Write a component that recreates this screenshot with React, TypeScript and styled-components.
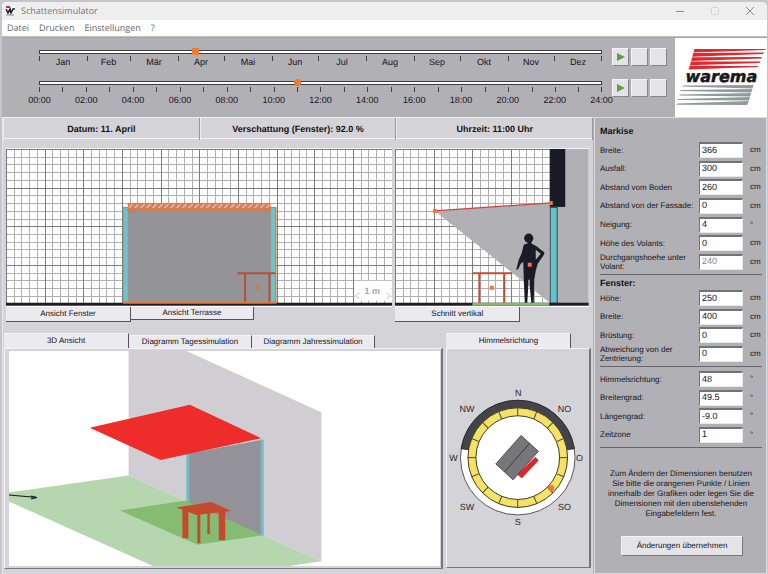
import React, { useState } from "react";
import styled, { createGlobalStyle } from "styled-components";

const GlobalStyle = createGlobalStyle`
  *, *::before, *::after { box-sizing: border-box; }
  body {
    margin: 0;
    background: #c9c8cc;
    font: 8px/10px "Liberation Sans", Arial, sans-serif;
    text-rendering: geometricPrecision;
    color: #141419;
  }
  button, input { font: inherit; color: inherit; border-radius: 0; text-rendering: inherit; }
  svg { display: block; }
  svg text { font-family: "Liberation Sans", Arial, sans-serif; }
`;

const Window = styled.div`
  min-height: 100vh;
  display: flex;
  flex-direction: column;
  background: #d4d3d8;
  border: 2px solid #c6c5ca;
  border-right-width: 1px;
  border-radius: 6px 6px 0 0;
  overflow: hidden;
`;

const TitleBar = styled.header`
  height: 18px;
  flex: none;
  display: flex;
  align-items: center;
  gap: 6px;
  padding-left: 3px;
  background: #eeeeee;
`;

const Title = styled.h1`
  flex: 1;
  margin: 0;
  font: 9px/12px "Open Sans", "Noto Sans", sans-serif;
  color: #77777b;
`;

const Controls = styled.div`
  display: flex;
`;

const WindowButton = styled.button`
  width: 35px;
  height: 18px;
  padding: 0;
  border: 0;
  background: none;
  display: grid;
  place-items: center;
`;

const MenuBar = styled.nav`
  height: 17px;
  flex: none;
  display: flex;
  align-items: center;
  gap: 10px;
  padding-left: 5px;
  background: #fff;
  border-bottom: 1px solid #c2c2c6;
`;

const MenuItem = styled.button`
  padding: 0;
  border: 0;
  background: none;
  font: 9px/14px "Open Sans", "Noto Sans", sans-serif;
  color: #66666a;
`;

const TimeBar = styled.section`
  display: flex;
  height: 80px;
  flex: none;
  background: #b1b0b5;
  border-top: 1px solid #a5a4a9;
`;

const Sliders = styled.div`
  flex: 1;
  display: flex;
  flex-direction: column;
  gap: 2px;
  padding: 10px 8px 0 37px;
  font-size: 9px;
`;

const SliderRow = styled.div`
  display: flex;
  gap: 10px;
  height: 29px;
`;

const SliderBody = styled.div`
  flex: 1;
  min-width: 0;
`;

const Range = styled.input<{ $round?: boolean }>`
  appearance: none;
  display: block;
  width: 100%;
  height: 8px;
  margin: 0;
  background: none;
  &::-webkit-slider-runnable-track {
    height: 4px;
    background: #fff;
    border: 1px solid #3c3c42;
  }
  &::-webkit-slider-thumb {
    appearance: none;
    width: 7px;
    height: 7px;
    margin-top: -3px;
    background: #f07832;
    border-radius: ${(p) => (p.$round ? "3px" : "1px")};
  }
`;

const tick = "linear-gradient(#3c3c42, #3c3c42)";

const MonthScale = styled.div`
  display: flex;
  height: 14px;
  margin-top: -1px;
  padding-top: 1px;
  background: ${tick} right 1px / 1px 5px no-repeat;
`;

const Month = styled.span<{ $days: number }>`
  flex: ${(p) => p.$days} 1 0;
  padding-top: 1px;
  text-align: center;
  background: ${tick} left top / 1px 5px no-repeat;
`;

const HourTicks = styled.div`
  display: flex;
  height: 6px;
  background: ${tick} right top / 1px 5px no-repeat;
`;

const HourTick = styled.i`
  flex: 1;
  background: ${tick} left top / 1px 5px no-repeat;
`;

const HourLabels = styled.div`
  display: flex;
  margin: 2px -23px 0;
`;

const HourLabel = styled.span`
  flex: 1 1 0;
  text-align: center;
`;

const PlayerButtons = styled.div`
  display: flex;
  gap: 2px;
`;

const PlayerButton = styled.button`
  width: 17px;
  height: 18px;
  padding: 0;
  display: grid;
  place-items: center;
  background: #e4e3e8;
  border: 1px solid;
  border-color: #f4f4f8 #85848a #85848a #f4f4f8;
`;

const Logo = styled.div`
  width: 92px;
  background: #fff;
`;

const Body = styled.main`
  flex: 1;
  display: grid;
  grid-template-columns: minmax(0, 1fr) 173px;
`;

const Workspace = styled.div`
  display: flex;
  flex-direction: column;
  border-right: 1px solid #b1b0b5;
  border-left: 1px solid #e6e5ea;
`;

const StatusBar = styled.div`
  display: grid;
  grid-template-columns: repeat(3, 1fr);
  height: 22px;
  border-top: 1px solid #eeedf2;
  border-bottom: 1px solid #f4f3f8;
`;

const StatusCell = styled.div`
  font-size: 9px;
  font-weight: bold;
  line-height: 22px;
  text-align: center;
  color: #111;
  border-right: 1px solid #97969c;
  border-left: 1px solid #eeedf2;
`;

const ViewGrid = styled.div<{ $columns: string }>`
  display: grid;
  grid-template-columns: ${(p) => p.$columns};
  gap: 3px;
`;

const TopViews = styled(ViewGrid)`
  padding: 9px 4px 0 3px;
`;

const BottomViews = styled(ViewGrid)`
  padding: 11px 2px 0 1px;
`;

const Panel = styled.section`
  display: flex;
  flex-direction: column;
  min-width: 0;
`;

const Drawing = styled.div`
  border-top: 1px solid #f4f4f8;
  background: #fff;
`;

const Tabs = styled.div<{ $below?: boolean }>`
  display: flex;
  align-items: ${(p) => (p.$below ? "flex-start" : "flex-end")};
`;

const Tab = styled.button<{ $active?: boolean; $below?: boolean }>`
  width: ${(p) => (p.$active ? "125px" : "123px")};
  height: ${(p) => (p.$active ? "15px" : "13px")};
  padding: 0;
  line-height: 12px;
  text-align: center;
  background: #ebeaef;
  border: 0 solid #55545a;
  border-right-width: 1px;
  border-bottom-width: ${(p) => (p.$below ? "1px" : "0")};
  ${(p) => (p.$below ? "" : "border-top: 1px solid #f6f6fa;")}
`;

const Frame = styled.div<{ $pad: string }>`
  padding: ${(p) => p.$pad};
  border: 1px solid;
  border-color: #f4f4f8 #77767c #77767c #f4f4f8;
  border-right-width: 2px;
`;

const Sidebar = styled.form`
  padding: 8px 4px 17px 5px;
  background: #b1b0b5;
  border: 1px solid #dddce1;
  border-bottom-width: 2px;
`;

const Heading = styled.h2<{ $gap?: boolean }>`
  margin: 0 0 ${(p) => (p.$gap ? "4px" : "0")};
  font-size: 9px;
  line-height: 11px;
  color: #111;
`;

const Fields = styled.div<{ $height: number }>`
  display: grid;
  grid-auto-rows: 1fr;
  min-height: ${(p) => p.$height}px;
`;

const Field = styled.div`
  display: grid;
  grid-template-columns: minmax(0, 1fr) 44px 17px;
  column-gap: 2px;
  align-items: center;
`;

const FieldLabel = styled.label`
  line-height: 9px;
  white-space: pre;
`;

const FieldInput = styled.input`
  width: 100%;
  height: 16px;
  padding: 0 0 2px 2px;
  font-size: 9px;
  background: #fff;
  border: 1px solid;
  border-color: #737278 #e8e7ec #e8e7ec #737278;
  border-top-width: 2px;
  &:disabled { color: #85858a; }
`;

const Unit = styled.span`
  padding-left: 5px;
`;

const Rule = styled.hr`
  height: 1px;
  margin: 3px 0;
  border: 0;
  background: #66656b;
`;

const Hint = styled.p`
  margin: 21px 0 17px;
  text-align: center;
  line-height: 10px;
`;

const Apply = styled.button`
  display: block;
  width: 122px;
  height: 20px;
  margin-left: 21px;
  padding: 0;
  background: #e4e3e8;
  border: 1px solid;
  border-color: #f4f4f8 #77767c #77767c #f4f4f8;
`;

const months: [string, number][] = [
  ["Jan", 31], ["Feb", 28], ["Mär", 31], ["Apr", 30], ["Mai", 31], ["Jun", 30],
  ["Jul", 31], ["Aug", 31], ["Sep", 30], ["Okt", 31], ["Nov", 30], ["Dez", 31],
];
const hours = Array.from({ length: 13 }, (_, i) => `${String(i * 2).padStart(2, "0")}:00`);

type FieldSpec = { id: string; label: string; value: string; unit: string; disabled?: boolean };
const awning: FieldSpec[] = [
  { id: "m-breite", label: "Breite:", value: "366", unit: "cm" },
  { id: "m-ausfall", label: "Ausfall:", value: "300", unit: "cm" },
  { id: "m-boden", label: "Abstand vom Boden", value: "260", unit: "cm" },
  { id: "m-fassade", label: "Abstand von der Fassade:", value: "0", unit: "cm" },
  { id: "m-neigung", label: "Neigung:", value: "4", unit: "°" },
  { id: "m-volant", label: "Höhe des Volants:", value: "0", unit: "cm" },
  { id: "m-durchgang", label: "Durchgangshoehe unter\nVolant:", value: "240", unit: "cm", disabled: true },
];
const windowFields: FieldSpec[] = [
  { id: "f-hoehe", label: "Höhe:", value: "250", unit: "cm" },
  { id: "f-breite", label: "Breite:", value: "400", unit: "cm" },
  { id: "f-bruestung", label: "Brüstung:", value: "0", unit: "cm" },
  { id: "f-zentrierung", label: "Abweichung von der\nZentrierung:", value: "0", unit: "cm" },
];
const place: FieldSpec[] = [
  { id: "o-richtung", label: "Himmelsrichtung:", value: "48", unit: "°" },
  { id: "o-breite", label: "Breitengrad:", value: "49.5", unit: "°" },
  { id: "o-laenge", label: "Längengrad:", value: "-9.0", unit: "°" },
  { id: "o-zone", label: "Zeitzone", value: "1", unit: "°" },
];

function FieldGroup({ items, height }: { items: FieldSpec[]; height: number }) {
  return (
    <Fields $height={height}>
      {items.map((f) => (
        <Field key={f.id}>
          <FieldLabel htmlFor={f.id}>{f.label}</FieldLabel>
          <FieldInput id={f.id} defaultValue={f.value} disabled={f.disabled} />
          <Unit>{f.unit}</Unit>
        </Field>
      ))}
    </Fields>
  );
}

function Player({ name }: { name: string }) {
  return (
    <PlayerButtons>
      <PlayerButton type="button" aria-label={`${name} abspielen`}>
        <svg width="9" height="10"><path d="M1 1L9 5L1 9Z" fill="#55a43c" /></svg>
      </PlayerButton>
      <PlayerButton type="button" aria-label={`${name} anhalten`} />
      <PlayerButton type="button" aria-label={`${name} stoppen`} />
    </PlayerButtons>
  );
}

const LogoText = styled.text`
  && { font: italic bold 16px "DejaVu Sans", sans-serif; }
  fill: #17171c;
  stroke: #17171c;
  stroke-width: 0.5px;
`;

function WaremaLogo() {
  return (
    <svg width="92" height="79" viewBox="675 38 92 79" role="img" aria-label="warema">
      <g fill="#dc2b30">
        <path d="M694.5 49H766L765 50L693.500 52.500Z" />
        <path d="M693.300 53L764 52.500L763 54L692.300 56.700Z" />
        <path d="M692.100 57.200L762 57L761 58.500L691.100 61Z" />
        <path d="M690.900 61.500L760.500 61.500L759.500 63L689.900 65.200Z" />
        <path d="M689.700 65.700L758.500 66L757.500 67L688.500 69.500Z" />
      </g>
      <g fill="#909b9c">
        <path d="M753.500 85L752.500 88.500L682 86.500L683 85.500Z" />
        <path d="M752.300 89L751.300 92.500L680 91L681 90Z" />
        <path d="M751.100 93L750.100 96.500L679 95.500L680 94.500Z" />
        <path d="M749.900 97L748.900 100.500L677.500 100L678.500 99Z" />
        <path d="M748.700 101L747.300 105L676 104.700L677.500 103.500Z" />
      </g>
      <LogoText x="685.500" y="81.500">warema</LogoText>
    </svg>
  );
}

function MeterGrid({ x, width }: { x: number; width: number }) {
  const step = 7.73;
  const lines = (from: number, length: number, major: boolean) =>
    Array.from({ length: Math.ceil(length / step) }, (_, i) => i)
      .filter((i) => (i % 5 === 0) === major)
      .map((i) => Math.round(from + i * step) + 0.5);
  const path = (major: boolean) =>
    lines(x, width, major).map((v) => `M${v} 149V303`).join("") +
    lines(149, 154, major).map((v) => `M${x} ${v}h${width}`).join("");
  return (
    <g shapeRendering="crispEdges">
      <path d={path(false)} stroke="#b0b0b3" />
      <path d={path(true)} stroke="#7c7c80" />
    </g>
  );
}

function TerraceView() {
  return (
    <svg width="100%" viewBox="6 149 387 158" role="img" aria-label="Ansicht Terrasse">
      <MeterGrid x={6} width={387} />
      <defs>
        <pattern id="hatch" x="128" y="204" width="6" height="5" patternUnits="userSpaceOnUse">
          <path d="M0 5L5 0" stroke="#f0c8b4" strokeWidth="1.300" />
        </pattern>
      </defs>
      <rect x="6" y="303" width="387" height="3" fill="#1d1d22" />
      <rect x="123.500" y="207.500" width="153" height="95" fill="#949398" stroke="#e07a3c" />
      <path d="M126 208V302M273.500 208V302" stroke="#6fc3ca" strokeWidth="4" />
      <rect x="128.500" y="203.500" width="142" height="8" fill="#cf7d5a" stroke="#e8752f" />
      <rect x="129" y="204" width="141" height="4" fill="url(#hatch)" />
      <path d="M123 303H277" stroke="#e07a3c" strokeWidth="2" />
      <path d="M238 273.500H276M245.500 274V302M270 274V302" stroke="#b94e36" strokeWidth="2" fill="none" />
      <rect x="255" y="286" width="5" height="4" fill="#d07a45" />
      <rect x="355" y="281" width="37" height="20" fill="#fff" />
      <text x="373" y="294" textAnchor="middle" fontSize="9" fontWeight="bold" fill="#a5a5a9">1 m</text>
      <path d="M360 293L356 296L360 299M387 293L391 296L387 299" fill="none" stroke="#c4c4c8" />
    </svg>
  );
}

function SectionView() {
  return (
    <svg width="100%" viewBox="395 149 194 158" role="img" aria-label="Schnitt vertikal">
      <MeterGrid x={395} width={155} />
      <rect x="550" y="149" width="39" height="155" fill="#b1b0b5" />
      <path d="M435 211L550 203V303Z" fill="#b1b0b5" />
      <rect x="550" y="149" width="15.500" height="58" fill="#1b1b27" />
      <rect x="550.500" y="207.500" width="7" height="96" fill="#67c2c9" stroke="#2e4c55" />
      <rect x="395" y="303" width="194" height="3" fill="#1d1d22" />
      <rect x="472.500" y="303" width="77" height="3" fill="#82bb72" />
      <path d="M435 211L551 203" stroke="#c9463a" strokeWidth="1.300" />
      <path d="M473 273.500H511.500M479.500 274V303M504.500 274V303" stroke="#c14f32" strokeWidth="2" fill="none" />
      <g fill="#1b1b27">
        <circle cx="529" cy="238.300" r="4.600" />
        <path d="M528 242H531.500L532 244L536 246L544.500 252.500V254.500L538 264L536 271L534.500 280L534 303H531.500L530 287V280H528.500V287L527.500 303H525L524 280L523.500 262L521 264L518 270L516.500 269.500L519 260L522 253L524 245L528 243.500ZM536 250V260L541 254Z" fillRule="evenodd" />
      </g>
      <path d="M433 209h4v4h-4zM549 201h4v4h-4zM490 286h4v4h-4zM528 263h4v4h-4z" fill="#f07832" />
    </svg>
  );
}

function PerspectiveView() {
  return (
    <svg width="100%" viewBox="9 351 433 216" role="img" aria-label="3D Ansicht">
      <rect x="9" y="351" width="433" height="216" fill="#fff" />
      <path d="M129 351H187L322.500 412.500V562L129 476Z" fill="#d0ced3" />
      <path d="M9 493L129 476L322.500 562L288 567H154L9 502Z" fill="#b5d6ae" />
      <path d="M120.500 511L187 501L263 536L198 545.500Z" fill="#86bb72" />
      <path d="M188 454L264 440V536.500L188 502Z" fill="#939298" />
      <path d="M188.500 454V502M263 440V536.500" stroke="#70bcc5" strokeWidth="3" />
      <path d="M90 428L190.500 405L262 438.500L161 460.500Z" fill="#ee2d2a" />
      <g fill="#c54a2c">
        <path d="M183 509H189V539H183ZM208 512H210.500V535H208ZM219.500 510H226V541H219.500Z" />
        <path d="M177 508L212 502.500L232 511.500L197 515.500Z" />
        <path d="M198 513H201V544H198Z" />
      </g>
      <path d="M9 495.500L37 498M31 496.500L37 498L31 499.500" fill="none" stroke="#17171c" strokeWidth="1.200" />
    </svg>
  );
}

const compassLabels: [string, number, number][] = [
  ["N", 518.5, 396.5], ["NW", 467, 412], ["NO", 565, 412], ["W", 453.5, 461],
  ["O", 580, 461], ["SW", 467, 511], ["SO", 565, 511], ["S", 518, 526],
];

function Compass() {
  return (
    <svg width="100%" viewBox="447 351 142 216" role="img" aria-label="Himmelsrichtung">
      <circle cx="518" cy="458" r="57.500" fill="#fff" stroke="#55555a" />
      <path d="M461.200 449A57.500 57.500 0 0 1 574.800 449L567 450A50 50 0 0 0 469 450Z" fill="#434349" stroke="#2d2d33" />
      <circle cx="518" cy="458" r="46" fill="none" stroke="#f5e264" strokeWidth="8" />
      <circle cx="518" cy="458" r="50" fill="none" stroke="#3c3a2c" />
      <circle cx="518" cy="458" r="42" fill="none" stroke="#3c3a2c" />
      {Array.from({ length: 16 }, (_, i) => (
        <path key={i} d="M518 408V416" stroke="#4b4630" transform={`rotate(${i * 22.5} 518 458)`} />
      ))}
      <path d="M535.700 457.500L538.500 461L522 478.500L518 475Z" fill="#e2232b" stroke="#8c2830" strokeWidth=".6" />
      <path d="M521.300 435.700L538.700 451.700L513.300 480.300L496 464.300Z" fill="#77767b" stroke="#38373c" strokeWidth=".8" />
      <path d="M529.500 444L504.700 472.300" stroke="#38373c" />
      <circle cx="551.700" cy="488.500" r="3" fill="#f07832" />
      {compassLabels.map(([t, x, y]) => (
        <text key={t} x={x} y={y} textAnchor="middle" fontSize="9" fill="#26262c">{t}</text>
      ))}
    </svg>
  );
}

function WindowControls() {
  return (
    <Controls>
      <WindowButton aria-label="Minimieren"><svg width="8" height="8"><path d="M0 4.500H8" stroke="#8b8b8f" /></svg></WindowButton>
      <WindowButton aria-label="Maximieren"><svg width="8" height="8"><rect x=".5" y=".5" width="7" height="7" rx="1" fill="none" stroke="#d4d4d7" /></svg></WindowButton>
      <WindowButton aria-label="Schließen"><svg width="8" height="8"><path d="M0 0L8 8M8 0L0 8" stroke="#8b8b8f" /></svg></WindowButton>
    </Controls>
  );
}

export default function App() {
  const [day, setDay] = useState(101);
  const [hour, setHour] = useState(11);
  return (
    <>
      <GlobalStyle />
      <Window>
        <TitleBar>
          <svg width="10" height="10" viewBox="0 0 10 10">
            <rect width="10" height="10" fill="#fff" />
            <path d="M1 0H5V2H1Z" fill="#d52b4c" />
            <path d="M1 3L3 7L5 3L6 7L8 3H10" fill="none" stroke="#202026" strokeWidth="1.600" />
            <path d="M1 9H9" stroke="#77777c" />
          </svg>
          <Title>Schattensimulator</Title>
          <WindowControls />
        </TitleBar>
        <MenuBar>
          <MenuItem>Datei</MenuItem>
          <MenuItem>Drucken</MenuItem>
          <MenuItem>Einstellungen</MenuItem>
          <MenuItem>?</MenuItem>
        </MenuBar>
        <TimeBar>
          <Sliders>
            <SliderRow>
              <SliderBody>
                <Range type="range" aria-label="Datum" min={1} max={365} value={day} onChange={(e) => setDay(+e.target.value)} />
                <MonthScale>
                  {months.map(([name, days]) => <Month key={name} $days={days}>{name}</Month>)}
                </MonthScale>
              </SliderBody>
              <Player name="Datum" />
            </SliderRow>
            <SliderRow>
              <SliderBody>
                <Range $round type="range" aria-label="Uhrzeit" min={0} max={24} value={hour} onChange={(e) => setHour(+e.target.value)} />
                <HourTicks>{Array.from({ length: 24 }, (_, i) => <HourTick key={i} />)}</HourTicks>
                <HourLabels>{hours.map((h) => <HourLabel key={h}>{h}</HourLabel>)}</HourLabels>
              </SliderBody>
              <Player name="Uhrzeit" />
            </SliderRow>
          </Sliders>
          <Logo><WaremaLogo /></Logo>
        </TimeBar>
        <Body>
          <Workspace>
            <StatusBar>
              <StatusCell>Datum: 11. April</StatusCell>
              <StatusCell>Verschattung (Fenster): 92.0 %</StatusCell>
              <StatusCell>Uhrzeit: 11:00 Uhr</StatusCell>
            </StatusBar>
            <TopViews $columns="387fr 194fr">
              <Panel>
                <Drawing><TerraceView /></Drawing>
                <Tabs $below>
                  <Tab $below $active>Ansicht Fenster</Tab>
                  <Tab $below>Ansicht Terrasse</Tab>
                </Tabs>
              </Panel>
              <Panel>
                <Drawing><SectionView /></Drawing>
                <Tabs $below><Tab $below $active>Schnitt vertikal</Tab></Tabs>
              </Panel>
            </TopViews>
            <BottomViews $columns="441fr 145fr">
              <Panel>
                <Tabs>
                  <Tab $active>3D Ansicht</Tab>
                  <Tab>Diagramm Tagessimulation</Tab>
                  <Tab>Diagramm Jahressimulation</Tab>
                </Tabs>
                <Frame $pad="2px 1px 2px 4px"><PerspectiveView /></Frame>
              </Panel>
              <Panel>
                <Tabs><Tab $active>Himmelsrichtung</Tab></Tabs>
                <Frame $pad="2px 0 1px"><Compass /></Frame>
              </Panel>
            </BottomViews>
          </Workspace>
          <Sidebar onSubmit={(e) => e.preventDefault()}>
            <Heading $gap>Markise</Heading>
            <FieldGroup items={awning} height={130} />
            <Rule />
            <Heading>Fenster:</Heading>
            <FieldGroup items={windowFields} height={74} />
            <Rule />
            <FieldGroup items={place} height={74} />
            <Rule />
            <Hint>
              Zum Ändern der Dimensionen benutzen<br />
              Sie bitte die orangenen Punkte / Linien<br />
              innerhalb der Grafiken oder legen Sie die<br />
              Dimensionen mit den obenstehenden<br />
              Eingabefeldern fest.
            </Hint>
            <Apply type="submit">Änderungen übernehmen</Apply>
          </Sidebar>
        </Body>
      </Window>
    </>
  );
}
